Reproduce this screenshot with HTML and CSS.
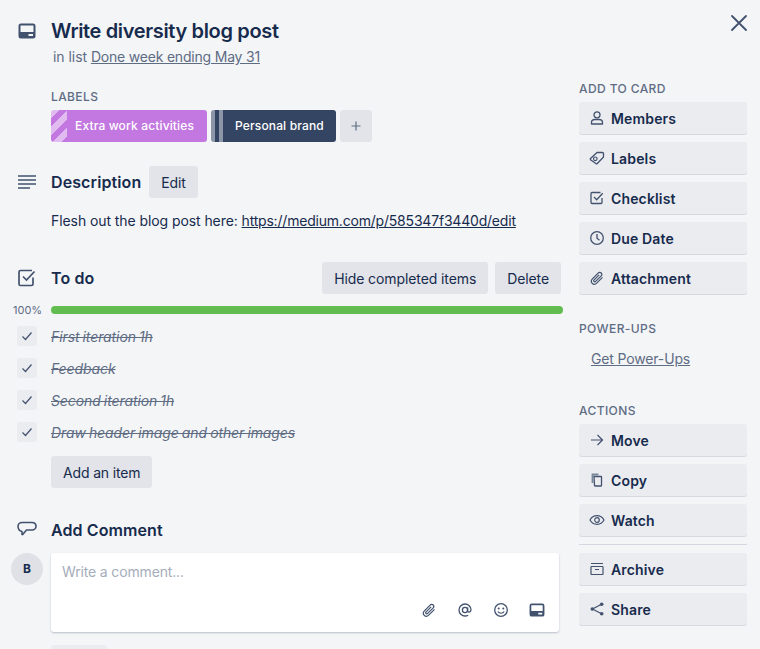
FILE: index.html
```html
<!DOCTYPE html>
<html lang="en">

<head>
    <meta charset="UTF-8">
    <meta name="viewport" content="width=device-width, initial-scale=1.0">
    <title>Write diversity blog post</title>
    <link rel="stylesheet" href="styles.css">
</head>

<body>
    <button class="close" type="button" aria-label="Close">
        <svg width="16" height="16" viewBox="0 0 16 16"><path d="M1 1l14 14M15 1L1 15" fill="none" stroke="#42526e" stroke-width="1.8" stroke-linecap="round"/></svg>
    </button>

    <header class="card-head">
        <div class="gutter">
            <svg class="big-icon" width="18" height="16" viewBox="0 0 18 16"><path fill-rule="evenodd" d="M3 .5h12A2.5 2.5 0 0 1 17.500 3v10a2.500 2.500 0 0 1-2.500 2.500H3A2.500 2.500 0 0 1 .5 13V3A2.500 2.500 0 0 1 3 .5zM2.500 2.500V9h13V2.500zM10.500 11v2h4.500v-2z" fill="#42526e"/></svg>
        </div>
        <div>
            <h1>Write diversity blog post</h1>
            <p class="in-list">in list <a href="#">Done week ending May 31</a></p>
        </div>
    </header>

    <div class="columns">
        <main>
            <section class="labels-block">
                <h3 class="small-title">Labels</h3>
                <div class="label-row">
                    <span class="chip chip-purple">Extra work activities</span>
                    <span class="chip chip-navy">Personal brand</span>
                    <button class="btn btn-plus" type="button" aria-label="Add label">
                        <svg width="12" height="12" viewBox="0 0 12 12"><path d="M6 1.500v9M1.500 6h9" stroke="#5e6c84" stroke-width="1.200" fill="none"/></svg>
                    </button>
                </div>
            </section>

            <section class="description">
                <div class="section-head">
                    <div class="gutter">
                        <svg class="big-icon" width="18" height="16" viewBox="0 0 18 16"><path d="M0 2h18M0 6h18M0 10h18M0 14h12" stroke="#42526e" stroke-width="1.700" fill="none"/></svg>
                    </div>
                    <h2>Description</h2>
                    <button class="btn" type="button">Edit</button>
                </div>
                <p class="desc-text">Flesh out the blog post here: <a href="#">https://medium.com/p/585347f3440d/edit</a></p>
            </section>

            <section class="checklist">
                <div class="section-head split">
                    <div class="gutter">
                        <svg class="big-icon" width="18" height="18" viewBox="0 0 18 18"><path d="M15 8.500V15a1.500 1.500 0 0 1-1.500 1.500h-11A1.500 1.500 0 0 1 1 15V3a1.500 1.500 0 0 1 1.500-1.500H14" fill="none" stroke="#42526e" stroke-width="1.700"/><path d="M5 7.500l3.500 3.500 8-8.500" fill="none" stroke="#42526e" stroke-width="1.700"/></svg>
                    </div>
                    <h2>To do</h2>
                    <div class="head-actions">
                        <button class="btn" type="button">Hide completed items</button>
                        <button class="btn" type="button">Delete</button>
                    </div>
                </div>
                <div class="progress">
                    <span class="percent">100%</span>
                    <div class="bar"></div>
                </div>
                <ul class="items">
                    <li>
                        <span class="tick"><svg width="12" height="10" viewBox="0 0 12 10"><path d="M1.500 5.500l3 3 6-7" fill="none" stroke="#42526e" stroke-width="1.200"/></svg></span>
                        <span class="item-text">First iteration 1h</span>
                    </li>
                    <li>
                        <span class="tick"><svg width="12" height="10" viewBox="0 0 12 10"><path d="M1.500 5.500l3 3 6-7" fill="none" stroke="#42526e" stroke-width="1.200"/></svg></span>
                        <span class="item-text">Feedback</span>
                    </li>
                    <li>
                        <span class="tick"><svg width="12" height="10" viewBox="0 0 12 10"><path d="M1.500 5.500l3 3 6-7" fill="none" stroke="#42526e" stroke-width="1.200"/></svg></span>
                        <span class="item-text">Second iteration 1h</span>
                    </li>
                    <li>
                        <span class="tick"><svg width="12" height="10" viewBox="0 0 12 10"><path d="M1.500 5.500l3 3 6-7" fill="none" stroke="#42526e" stroke-width="1.200"/></svg></span>
                        <span class="item-text">Draw header image and other images</span>
                    </li>
                </ul>
                <button class="btn" type="button">Add an item</button>
            </section>

            <section class="comment">
                <div class="section-head">
                    <div class="gutter">
                        <svg class="big-icon comment-icon" width="20" height="18" viewBox="0 0 20 18"><path d="M5 1.500h10c2.200 0 4 1.500 4 3.700S17.200 9 15 9h-5.500l-3.800 4.500c-.3.300-.7.100-.7-.3V10.500C2.900 10 1 7.800 1 5.200 1 3 2.800 1.500 5 1.500z" fill="none" stroke="#42526e" stroke-width="1.600" stroke-linejoin="round"/></svg>
                    </div>
                    <h2>Add Comment</h2>
                </div>
                <div class="comment-row">
                    <span class="avatar">B</span>
                    <div class="comment-box">
                        <p class="placeholder">Write a comment...</p>
                        <div class="comment-tools">
                            <svg width="16" height="16" viewBox="0 0 16 16"><use href="#clip"/></svg>
                            <svg width="16" height="16" viewBox="0 0 16 16"><circle cx="8" cy="8" r="2.600" fill="none" stroke="#42526e" stroke-width="1.300"/><path d="M10.600 5.500v3.300c0 1.800 3.400 1.800 3.400-1C14 4.500 11.300 2 8 2a6 6 0 0 0 0 12c1.300 0 2.300-.3 3.200-.8" fill="none" stroke="#42526e" stroke-width="1.300"/></svg>
                            <svg width="16" height="16" viewBox="0 0 16 16"><circle cx="8" cy="8" r="6.300" fill="none" stroke="#42526e" stroke-width="1.300"/><circle cx="5.700" cy="6.400" r="1" fill="#42526e"/><circle cx="10.300" cy="6.400" r="1" fill="#42526e"/><path d="M4.800 9.500c1.400 2.300 5 2.300 6.400 0" fill="none" stroke="#42526e" stroke-width="1.200"/></svg>
                            <svg width="16" height="14" viewBox="0 0 18 16"><path fill-rule="evenodd" d="M3 .5h12A2.500 2.500 0 0 1 17.500 3v10a2.500 2.500 0 0 1-2.500 2.500H3A2.500 2.500 0 0 1 .5 13V3A2.500 2.500 0 0 1 3 .5zM2.500 2.500V9h13V2.500zM10.500 11v2h4.500v-2z" fill="#42526e"/></svg>
                        </div>
                    </div>
                </div>
                <button class="btn btn-save" type="button" aria-label="Save"></button>
            </section>
        </main>

        <aside class="sidebar">
            <h3 class="small-title">Add to card</h3>
            <button class="side-btn" type="button">
                <svg width="16" height="16" viewBox="0 0 16 16"><circle cx="8" cy="4.800" r="3" fill="none" stroke="#42526e" stroke-width="1.300"/><path d="M2.500 14v-1.500C2.500 10.500 4 9.500 6 9.500h4c2 0 3.500 1 3.500 3V14z" fill="none" stroke="#42526e" stroke-width="1.300" stroke-linejoin="round"/></svg>
                Members
            </button>
            <button class="side-btn" type="button">
                <svg width="16" height="16" viewBox="0 0 16 16"><path d="M1.500 8.500L8 2.500h5.500c.6 0 1 .4 1 1V7l-6.200 6.500c-.4.400-1 .4-1.400 0L1.500 9.800c-.3-.4-.3-.9 0-1.300z" fill="none" stroke="#42526e" stroke-width="1.300" stroke-linejoin="round"/><circle cx="6.300" cy="8.800" r="1.800" fill="none" stroke="#42526e" stroke-width="1.200"/></svg>
                Labels
            </button>
            <button class="side-btn" type="button">
                <svg width="16" height="16" viewBox="0 0 16 16"><path d="M13 8v4.500c0 .6-.4 1-1 1H3c-.6 0-1-.4-1-1v-9c0-.6.4-1 1-1h8.500" fill="none" stroke="#42526e" stroke-width="1.300"/><path d="M5 7l2.700 2.700 6-6.500" fill="none" stroke="#42526e" stroke-width="1.300"/></svg>
                Checklist
            </button>
            <button class="side-btn" type="button">
                <svg width="16" height="16" viewBox="0 0 16 16"><circle cx="8" cy="8" r="6.300" fill="none" stroke="#42526e" stroke-width="1.300"/><path d="M8 4v4.300l2.500 2" fill="none" stroke="#42526e" stroke-width="1.300"/></svg>
                Due Date
            </button>
            <button class="side-btn" type="button">
                <svg width="16" height="16" viewBox="0 0 16 16"><g id="clip"><path d="M13.500 7.300l-5.800 5.800c-1.400 1.400-3.300 1.400-4.500.2s-1.100-3 .2-4.400l5.700-5.700c1-1 2.300-1 3.100-.2s.8 2.100-.2 3.100L6.600 11.400c-.5.500-1.200.5-1.600.1s-.4-1.100.1-1.600l5-5" fill="none" stroke="#42526e" stroke-width="1.200"/></g></svg>
                Attachment
            </button>

            <h3 class="small-title power-title">Power-Ups</h3>
            <a class="power-link" href="#">Get Power-Ups</a>

            <h3 class="small-title actions-title">Actions</h3>
            <button class="side-btn" type="button">
                <svg width="16" height="16" viewBox="0 0 16 16"><path d="M2 8h11.500M8.500 3l5 5-5 5" fill="none" stroke="#42526e" stroke-width="1.200"/></svg>
                Move
            </button>
            <button class="side-btn" type="button">
                <svg width="16" height="16" viewBox="0 0 16 16"><path d="M5 4.500h7c.3 0 .5.200.5.500v8.500c0 .3-.2.500-.5.500H6c-.3 0-.5-.2-.5-.5z" fill="none" stroke="#42526e" stroke-width="1.300"/><path d="M3.500 11V2.500h6" fill="none" stroke="#7a869a" stroke-width="1.800"/></svg>
                Copy
            </button>
            <button class="side-btn" type="button">
                <svg width="16" height="16" viewBox="0 0 16 16"><path d="M1 8c1.500-2.800 4-4.300 7-4.300s5.500 1.500 7 4.300c-1.500 2.800-4 4.300-7 4.300S2.500 10.800 1 8z" fill="none" stroke="#42526e" stroke-width="1.200"/><circle cx="8" cy="8" r="2.300" fill="none" stroke="#42526e" stroke-width="1.200"/></svg>
                Watch
            </button>
            <hr class="side-rule">
            <button class="side-btn" type="button">
                <svg width="16" height="16" viewBox="0 0 16 16"><path d="M2 2.500h12M2.500 5.500h11c.3 0 .5.200.5.500v7c0 .3-.2.500-.5.500h-11c-.3 0-.5-.2-.5-.5V6c0-.3.2-.5.500-.5zM6 8.500h4" fill="none" stroke="#42526e" stroke-width="1.200"/></svg>
                Archive
            </button>
            <button class="side-btn" type="button">
                <svg width="16" height="16" viewBox="0 0 16 16"><path d="M12.500 3.200L3.500 8l9 4.800" fill="none" stroke="#42526e" stroke-width="1.200"/><circle cx="12.700" cy="3.200" r="1.800" fill="#42526e"/><circle cx="3.300" cy="8" r="1.800" fill="#42526e"/><circle cx="12.700" cy="12.800" r="1.800" fill="#42526e"/></svg>
                Share
            </button>
        </aside>
    </div>
</body>

</html>
```

FILE: styles.css
```css
/* Reset and base */
* {
    margin: 0;
    padding: 0;
    box-sizing: border-box;
}

html,
body {
    height: 649px;
    overflow: hidden;
}

body {
    position: relative;
    font-family: Inter, "Noto Sans", sans-serif;
    font-size: 14px;
    line-height: 20px;
    letter-spacing: -0.15px;
    background-color: #f4f5f7;
    color: #172b4d;
}

button {
    font-family: inherit;
    letter-spacing: inherit;
    border: none;
    cursor: pointer;
}

a {
    color: inherit;
}

/* Header */
.close {
    position: absolute;
    top: 15px;
    right: 13px;
    width: 16px;
    height: 16px;
    background: none;
    display: flex;
}

.card-head {
    display: flex;
    padding-top: 19px;
}

.gutter {
    width: 51px;
    flex-shrink: 0;
    padding-left: 18px;
}

.big-icon {
    display: block;
}

.comment-icon {
    margin-left: -1px;
}

.card-head .gutter {
    padding-top: 4px;
}

h1 {
    font-size: 20px;
    line-height: 24px;
    font-weight: 600;
    letter-spacing: -0.35px;
}

.in-list {
    margin: 4px 0 0 2px;
    color: #5e6c84;
    letter-spacing: -0.05px;
}

.in-list a,
.desc-text a {
    letter-spacing: -0.2px;
}

h2 {
    font-size: 16px;
    line-height: 20px;
    font-weight: 600;
    letter-spacing: 0.1px;
}

.small-title {
    font-size: 12px;
    line-height: 16px;
    font-weight: 500;
    letter-spacing: 0.4px;
    text-transform: uppercase;
    color: #5e6c84;
}

/* Main column */
.columns {
    display: flex;
}

main {
    width: 579px;
    flex-shrink: 0;
}

main > section > .small-title {
    margin-left: 51px;
}

.labels-block {
    padding-top: 22px;
}

.label-row {
    display: flex;
    gap: 4px;
    margin: 5px 0 0 51px;
}

.chip {
    height: 32px;
    line-height: 32px;
    border-radius: 3px;
    color: #fff;
    font-size: 12px;
    font-weight: 500;
    letter-spacing: 0.15px;
}

.chip-purple {
    width: 156px;
    padding-left: 24px;
    background:
        repeating-linear-gradient(135deg, rgba(255, 255, 255, 0.5) 0 6px, transparent 6px 12px) left / 16px 100% no-repeat,
        #c377e0;
}

.chip-navy {
    width: 125px;
    padding-left: 24px;
    background:
        linear-gradient(90deg, #8c96a8 0 4px, #344563 4px 8px, #8c96a8 8px 12px, #344563 12px) #344563;
}

.btn {
    height: 32px;
    padding: 0 12px;
    border-radius: 3px;
    background: #e2e4e9;
    color: #172b4d;
    font-size: 14px;
}

.btn-plus {
    width: 32px;
    padding: 0;
    display: flex;
    align-items: center;
    justify-content: center;
}

.section-head {
    display: flex;
    align-items: center;
}

.section-head .btn {
    margin-left: 8px;
}

.description {
    padding-top: 24px;
}

.desc-text {
    margin: 13px 0 0 51px;
    letter-spacing: -0.08px;
}

.checklist {
    padding-top: 31px;
}

.split {
    width: 561px;
}

.head-actions {
    margin-left: auto;
    display: flex;
}

.head-actions .btn {
    margin-left: 7px;
    letter-spacing: -0.1px;
}

.progress {
    display: flex;
    align-items: center;
    margin-top: 12px;
}

.percent {
    width: 51px;
    padding-left: 13px;
    font-size: 11px;
    line-height: 8px;
    letter-spacing: 0;
    color: #5e6c84;
}

.bar {
    width: 512px;
    height: 8px;
    border-radius: 4px;
    background: #61bd4f;
}

.items {
    list-style: none;
    margin-top: 12px;
}

.items li {
    height: 32px;
    display: flex;
    align-items: flex-start;
}

.tick {
    width: 20px;
    height: 20px;
    margin: 0 14px 0 17px;
    border-radius: 2px;
    background: #ebecf0;
    display: flex;
    align-items: center;
    justify-content: center;
}

.item-text {
    line-height: 22px;
    font-style: italic;
    letter-spacing: -0.1px;
    word-spacing: -0.7px;
    color: #5e6c84;
    text-decoration: line-through;
}

.checklist > .btn {
    margin: 2px 0 0 51px;
}

.comment {
    padding-top: 32px;
}

.comment-row {
    display: flex;
    margin-top: 13px;
}

.avatar {
    width: 32px;
    height: 32px;
    margin: 0 8px 0 11px;
    border-radius: 50%;
    background: #dfe1e6;
    font-size: 12px;
    font-weight: 700;
    line-height: 32px;
    text-align: center;
}

.comment-box {
    width: 508px;
    height: 79px;
    padding: 9px 11px 14px;
    border-radius: 3px;
    background: #fff;
    box-shadow: 0 1px 2px rgba(9, 30, 66, 0.25);
    display: flex;
    flex-direction: column;
    justify-content: space-between;
}

.placeholder {
    color: #a5adba;
}

.comment-tools {
    display: flex;
    justify-content: flex-end;
    align-items: center;
    gap: 20px;
    margin-right: 3px;
}

.btn-save {
    display: block;
    width: 56px;
    margin: 13px 0 0 51px;
    background: #ebecf0;
}

/* Sidebar */
.sidebar {
    width: 168px;
    padding-top: 14px;
}

.side-btn {
    display: flex;
    align-items: center;
    gap: 6px;
    width: 100%;
    height: 32px;
    margin-top: 8px;
    padding-left: 10px;
    border-radius: 3px;
    background: #ebecf0;
    box-shadow: 0 1px 0 rgba(9, 30, 66, 0.13);
    color: #172b4d;
    font-size: 14px;
    font-weight: 600;
    letter-spacing: 0.15px;
}

.small-title + .side-btn {
    margin-top: 5px;
}

.power-title {
    margin-top: 27px;
}

.power-link {
    display: block;
    margin: 12px 0 0 12px;
    color: #5e6c84;
}

.actions-title {
    margin-top: 34px;
}

.side-rule {
    border: none;
    height: 1px;
    margin-top: 8px;
    background: #d5d8e0;
}
```
